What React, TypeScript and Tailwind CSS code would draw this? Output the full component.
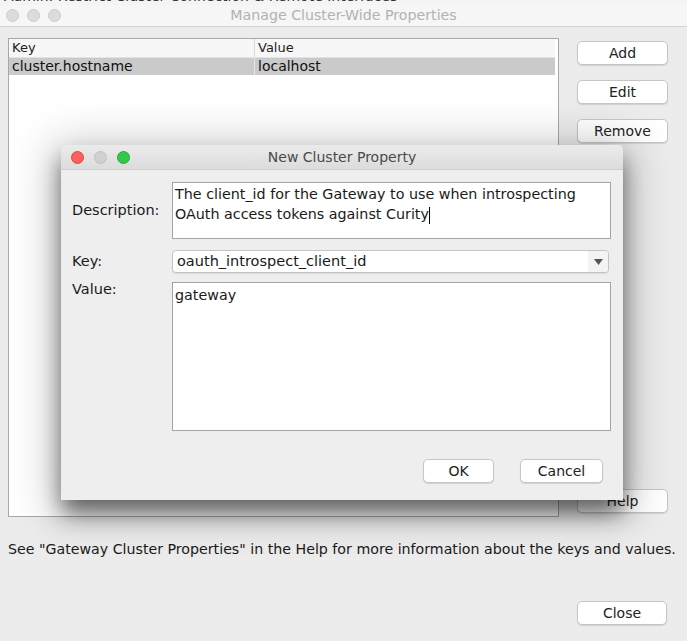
import React from "react";

const font = { fontFamily: '"DejaVu Sans", "Liberation Sans", sans-serif' };

function MacButton({ label, className = "" }: { label: string; className?: string }) {
  return (
    <button
      className={`h-[24px] rounded-[5px] border border-[#c6c6c6] bg-white text-[14px] text-[#222] shadow-[0_1px_1px_rgba(0,0,0,0.12)] flex items-center justify-center ${className}`}
    >
      {label}
    </button>
  );
}

function Light({ color, border }: { color: string; border: string }) {
  return <div className={`h-[13px] w-[13px] rounded-full border ${color} ${border}`} />;
}

function NewPropertyDialog() {
  return (
    <div className="absolute left-[61px] top-[145px] w-[562px] h-[355px] rounded-t-[5px] bg-[#eeeeee] shadow-[0_14px_22px_-1px_rgba(0,0,0,0.55),0_6px_44px_10px_rgba(0,0,0,0.2)] flex flex-col">
      {/* title bar */}
      <div className="relative h-[25px] rounded-t-[5px] bg-gradient-to-b from-[#ebebeb] to-[#dcdcdc] border-b border-[#cfcfcf] flex items-center">
        <div className="flex items-center gap-[10px] pl-[10px]">
          <Light color="bg-[#fc605b]" border="border-[#e0443e]" />
          <Light color="bg-[#d0d0d0]" border="border-[#c0c0c0]" />
          <Light color="bg-[#34c84a]" border="border-[#24a838]" />
        </div>
        <div className="absolute inset-0 flex items-center justify-center text-[14px] text-[#4a4a4a]">
          New Cluster Property
        </div>
      </div>

      {/* body */}
      <div className="flex flex-col pl-[11px] pr-[12px] pt-[12px] text-[14.5px] text-[#1a1a1a]">
        <div className="flex items-center">
          <div className="w-[100px]">Description:</div>
          <div className="h-[57px] flex-1 border border-[#a3a3a3] bg-white px-[2px] pt-[1px] leading-[20px] text-[14.3px] whitespace-nowrap">
            The client_id for the Gateway to use when introspecting
            <br />
            OAuth access tokens against Curity
            <span className="inline-block h-[17px] w-px bg-black align-middle" />
          </div>
        </div>

        <div className="flex items-center mt-[11px]">
          <div className="w-[100px]">Key:</div>
          <div className="h-[23px] w-[437px] rounded-[4px] border border-[#c4c4c4] bg-white flex items-center overflow-hidden shadow-[0_1px_1px_rgba(0,0,0,0.08)]">
            <div className="flex-1 pl-[4px] text-[14.5px]">oauth_introspect_client_id</div>
            <div className="h-full w-[20px] bg-[#f3f3f3] flex items-center justify-center">
              <svg width="9" height="6" viewBox="0 0 9 6">
                <path d="M0 0 L9 0 L4.5 6 Z" fill="#555" />
              </svg>
            </div>
          </div>
        </div>

        <div className="flex items-start mt-[9px]">
          <div className="w-[100px] leading-[15px]">Value:</div>
          <div className="h-[149px] flex-1 border border-[#a3a3a3] bg-white px-[2px] pt-[2px] text-[14.3px] leading-[20px]">
            gateway
          </div>
        </div>

        <div className="flex justify-end gap-[26px] mt-[28px] pr-[8px]">
          <MacButton label="OK" className="w-[71px]" />
          <MacButton label="Cancel" className="w-[83px]" />
        </div>
      </div>
    </div>
  );
}

export default function App() {
  return (
    <div className="relative w-[687px] h-[641px] overflow-hidden bg-[#ececec]" style={font}>
      {/* sliver of the window behind */}
      <div className="h-[5px] overflow-hidden bg-[#f4f4f4]">
        <div className="-mt-[12px] pl-[4px] text-[14px] leading-[16px] text-[#333] whitespace-nowrap">
          Admin: Restrict Cluster Connection &amp; Remote Interfaces
        </div>
      </div>

      {/* main window title bar */}
      <div className="relative h-[22px] bg-[#f6f6f6] border-b border-[#d4d4d4] flex items-center">
        <div className="flex items-center gap-[8px] pl-[6px]">
          <Light color="bg-[#dcdcdc]" border="border-[#cbcbcb]" />
          <Light color="bg-[#dcdcdc]" border="border-[#cbcbcb]" />
          <Light color="bg-[#dcdcdc]" border="border-[#cbcbcb]" />
        </div>
        <div className="absolute inset-0 flex items-center justify-center text-[14.2px] text-[#b2b2b2]">
          Manage Cluster-Wide Properties
        </div>
      </div>

      {/* main window body */}
      <div className="px-[8px] pt-[11px]">
        <div className="flex">
          <div className="w-[551px] h-[479px] border border-[#a8a8a8] bg-white">
            <div className="flex h-[19px] bg-[#f7f7f7] border-b border-[#e2e2e2] text-[13px] text-[#222] mr-[3px]">
              <div className="w-[246px] pl-[3px] border-r border-[#dcdcdc] flex items-center">Key</div>
              <div className="flex-1 pl-[3px] flex items-center">Value</div>
            </div>
            <div className="flex h-[17px] bg-[#cacaca] text-[14px] text-[#111] mr-[3px]">
              <div className="w-[246px] pl-[3px] border-r border-[#e6e6e6] flex items-center">cluster.hostname</div>
              <div className="flex-1 pl-[3px] flex items-center">localhost</div>
            </div>
          </div>

          <div className="ml-[18px] w-[91px] flex flex-col pt-[3px]">
            <MacButton label="Add" />
            <MacButton label="Edit" className="mt-[15px]" />
            <MacButton label="Remove" className="mt-[15px]" />
            <div className="flex-1" />
            <MacButton label="Help" className="mb-[4px]" />
          </div>
        </div>

        <div className="mt-[23px] h-[18px] leading-[18px] text-[14.2px] text-[#1a1a1a] whitespace-nowrap">
          See "Gateway Cluster Properties" in the Help for more information about the keys and values.
        </div>

        <div className="flex justify-end mt-[43px] pr-[12px]">
          <MacButton label="Close" className="w-[90px]" />
        </div>
      </div>

      <NewPropertyDialog />
    </div>
  );
}
